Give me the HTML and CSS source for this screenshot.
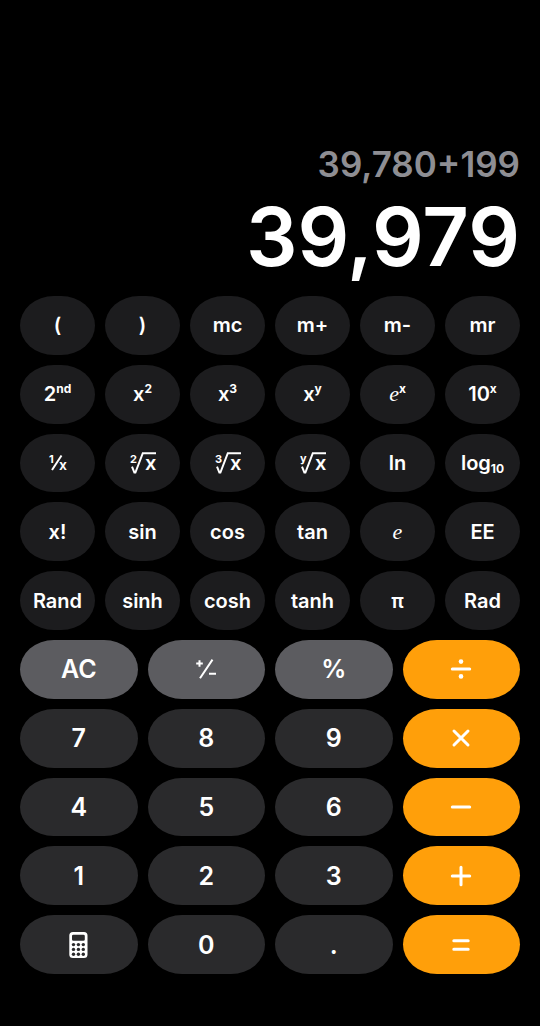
FILE: index.html
```
<!DOCTYPE html>
<html lang="en">
<head>
	<meta charset="UTF-8">
	<meta name="viewport" content="width=device-width, initial-scale=1">
	<title>Calculator</title>
<link rel="stylesheet" href="styles.css">
</head>
<body>
<main class="calculator">
	<div class="display">
		<div class="expression">39,780+199</div>
		<output class="result">39,979</output>
	</div>
	<div class="keypad">
		<button type="button" class="key">(</button>
		<button type="button" class="key">)</button>
		<button type="button" class="key">mc</button>
		<button type="button" class="key">m+</button>
		<button type="button" class="key">m-</button>
		<button type="button" class="key">mr</button>

		<button type="button" class="key"><span>2<sup>nd</sup></span></button>
		<button type="button" class="key"><span>x<sup>2</sup></span></button>
		<button type="button" class="key"><span>x<sup>3</sup></span></button>
		<button type="button" class="key"><span>x<sup>y</sup></span></button>
		<button type="button" class="key"><span><i>e</i><sup>x</sup></span></button>
		<button type="button" class="key"><span>10<sup>x</sup></span></button>

		<button type="button" class="key">
			<svg width="18" height="16" viewBox="0 0 18 16">
				<text class="index" x="0" y="8">1</text>
				<path class="thin" d="M12.5 .5L3 15"/>
				<text class="denominator" x="10" y="15">x</text>
			</svg>
		</button>
		<button type="button" class="key">
			<svg width="26" height="22" viewBox="0 0 26 22">
				<text class="index" x="0" y="11">2</text>
				<path class="thin" d="M2 14.6L4.4 20.6H5.4L12.8 1.2H26"/>
				<text class="radicand" x="15" y="18">x</text>
			</svg>
		</button>
		<button type="button" class="key">
			<svg width="26" height="22" viewBox="0 0 26 22">
				<text class="index" x="0" y="11">3</text>
				<path class="thin" d="M2 14.6L4.4 20.6H5.4L12.8 1.2H26"/>
				<text class="radicand" x="15" y="18">x</text>
			</svg>
		</button>
		<button type="button" class="key">
			<svg width="26" height="22" viewBox="0 0 26 22">
				<text class="index" x="0" y="10">y</text>
				<path class="thin" d="M2 14.6L4.4 20.6H5.4L12.8 1.2H26"/>
				<text class="radicand" x="15" y="18">x</text>
			</svg>
		</button>
		<button type="button" class="key">ln</button>
		<button type="button" class="key"><span>log<sub>10</sub></span></button>

		<button type="button" class="key">x!</button>
		<button type="button" class="key">sin</button>
		<button type="button" class="key">cos</button>
		<button type="button" class="key">tan</button>
		<button type="button" class="key"><i>e</i></button>
		<button type="button" class="key">EE</button>

		<button type="button" class="key">Rand</button>
		<button type="button" class="key">sinh</button>
		<button type="button" class="key">cosh</button>
		<button type="button" class="key">tanh</button>
		<button type="button" class="key">π</button>
		<button type="button" class="key">Rad</button>

		<button type="button" class="key wide light">AC</button>
		<button type="button" class="key wide light" aria-label="plus minus">
			<svg width="20" height="20" viewBox="0 0 20 20">
				<path class="thin" d="M3.5 1.2V7.8M.2 4.5H6.8M16.5 .6L4 19.2M13 14.8H20"/>
			</svg>
		</button>
		<button type="button" class="key wide light">%</button>
		<button type="button" class="key wide orange" aria-label="divide">
			<svg width="22" height="22" viewBox="0 0 22 22">
				<path d="M2.3 11H19.7"/>
				<circle cx="11" cy="3.6" r="2.3"/>
				<circle cx="11" cy="18.4" r="2.3"/>
			</svg>
		</button>

		<button type="button" class="key wide">7</button>
		<button type="button" class="key wide">8</button>
		<button type="button" class="key wide">9</button>
		<button type="button" class="key wide orange" aria-label="multiply">
			<svg width="22" height="22" viewBox="0 0 22 22"><path d="M4 4L18 18M18 4L4 18"/></svg>
		</button>

		<button type="button" class="key wide">4</button>
		<button type="button" class="key wide">5</button>
		<button type="button" class="key wide">6</button>
		<button type="button" class="key wide orange" aria-label="subtract">
			<svg width="22" height="22" viewBox="0 0 22 22"><path d="M2.3 11H19.7"/></svg>
		</button>

		<button type="button" class="key wide">1</button>
		<button type="button" class="key wide">2</button>
		<button type="button" class="key wide">3</button>
		<button type="button" class="key wide orange" aria-label="add">
			<svg width="22" height="22" viewBox="0 0 22 22"><path d="M2.3 11H19.7M11 2.3V19.7"/></svg>
		</button>

		<button type="button" class="key wide" aria-label="calculator mode">
			<svg width="19" height="26" viewBox="0 0 19 26">
				<path class="solid" fill-rule="evenodd" d="M4 0H15Q18.5 0 18.5 3.5V22.5Q18.5 26 15 26H4Q.3 26 .3 22.5V3.5Q.3 0 4 0ZM4.4 2.7Q3 2.7 3 4.1V7.5Q3 8.8 4.4 8.8H14.4Q15.8 8.8 15.8 7.5V4.1Q15.8 2.7 14.4 2.7Z"/>
				<g class="holes">
					<circle cx="4.5" cy="12.6" r="1.7"/><circle cx="9.4" cy="12.6" r="1.7"/><circle cx="14.3" cy="12.6" r="1.7"/>
					<circle cx="4.5" cy="17.4" r="1.7"/><circle cx="9.4" cy="17.4" r="1.7"/><circle cx="14.3" cy="17.4" r="1.7"/>
					<circle cx="4.5" cy="22.2" r="1.7"/><circle cx="9.4" cy="22.2" r="1.7"/><circle cx="14.3" cy="22.2" r="1.7"/>
				</g>
			</svg>
		</button>
		<button type="button" class="key wide">0</button>
		<button type="button" class="key wide">.</button>
		<button type="button" class="key wide orange" aria-label="equals">
			<svg width="22" height="22" viewBox="0 0 22 22"><path d="M3.8 6.8H18.2M3.8 15.2H18.2"/></svg>
		</button>
	</div>
</main>
</body>
</html>
```
FILE: styles.css
```
body{margin:0;background:#000;color:#fff;font-family:Inter,"Liberation Sans",sans-serif;}
.calculator{display:flex;flex-direction:column;min-height:100vh;box-sizing:border-box;padding:142px 20px 52px;}
.display{text-align:right;padding-bottom:8px;}
.expression{font-size:35px;line-height:44px;font-weight:600;color:#8e8e93;}
.result{display:block;font-size:81px;line-height:102px;font-weight:600;}

/* 12 tracks: function keys take 2, number keys take 3 */
.keypad{flex:1;display:grid;grid-template-columns:repeat(12,minmax(0,1fr));grid-auto-rows:1fr;gap:10px;}
.key{grid-column:span 2;display:flex;align-items:center;justify-content:center;min-height:44px;margin:0;padding:0;border:0;border-radius:34px / 50%;background:#1c1c1e;color:#fff;font-family:inherit;font-size:20px;line-height:24px;font-weight:600;cursor:pointer;}
.key:active{opacity:.7;}
.wide{grid-column:span 3;background:#2a2a2c;font-size:25px;line-height:30px;}
.light{background:#5c5c60;}
.orange{background:#ff9f0a;}

.key sup,.key sub{font-size:12px;line-height:0;font-weight:700;}
.key sup{vertical-align:8px;}
.key sub{vertical-align:-3px;}
.key i{font-family:"Liberation Serif",serif;font-size:22px;font-weight:400;}

.key svg{display:block;overflow:visible;fill:#fff;}
.key path{fill:none;stroke:#fff;stroke-width:3;stroke-linecap:round;}
.key .thin{stroke-width:2;stroke-linecap:butt;}
.key .solid{fill:#fff;stroke:none;}
.holes{fill:#2a2a2c;}
.index{font-size:11px;font-weight:700;}
.denominator{font-size:14px;}
.radicand{font-size:20px;}
```
